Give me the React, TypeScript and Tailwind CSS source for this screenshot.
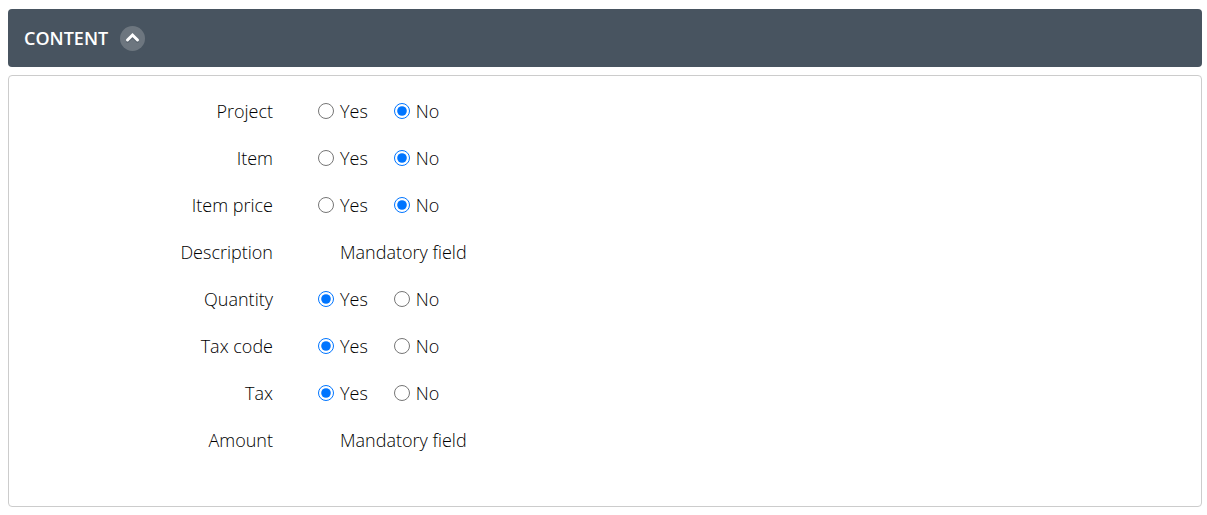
import { useState } from "react";

type Choice = "yes" | "no";

type Field = {
  id: string;
  label: string;
  value?: Choice;
};

const fields: Field[] = [
  { id: "project", label: "Project", value: "no" },
  { id: "item", label: "Item", value: "no" },
  { id: "item-price", label: "Item price", value: "no" },
  { id: "description", label: "Description" },
  { id: "quantity", label: "Quantity", value: "yes" },
  { id: "tax-code", label: "Tax code", value: "yes" },
  { id: "tax", label: "Tax", value: "yes" },
  { id: "amount", label: "Amount" },
];

function Radio({ field, choice, label }: { field: Field; choice: Choice; label: string }) {
  return (
    <label className="flex items-center gap-[6px]">
      <input
        type="radio"
        name={field.id}
        value={choice}
        defaultChecked={field.value === choice}
        className="w-4 h-4 accent-[#0075ff]"
      />
      {label}
    </label>
  );
}

function FieldRow({ field }: { field: Field }) {
  const labelId = `${field.id}-label`;

  return (
    <div className="flex items-center h-[47px]">
      <span id={labelId} className="w-[264px] shrink-0 text-right">
        {field.label}
      </span>
      {field.value ? (
        <div role="radiogroup" aria-labelledby={labelId} className="flex gap-[26px] pl-[45px]">
          <Radio field={field} choice="yes" label="Yes" />
          <Radio field={field} choice="no" label="No" />
        </div>
      ) : (
        <span className="pl-[67px]">Mandatory field</span>
      )}
    </div>
  );
}

export default function App() {
  const [open, setOpen] = useState(true);

  return (
    <main className="p-2 pt-[9px] pr-[5px] font-['Open_Sans',sans-serif] text-lg font-light text-black">
      <header className="flex items-center gap-3 h-[58px] px-4 rounded bg-[#485460] text-white">
        <h2 className="font-semibold">CONTENT</h2>
        <button
          type="button"
          aria-label="Toggle content"
          aria-expanded={open}
          onClick={() => setOpen(!open)}
          className="flex items-center justify-center w-[25px] h-[25px] rounded-full bg-[#6d767f]"
        >
          <svg viewBox="0 0 16 12" className={open ? "w-4 h-3" : "w-4 h-3 rotate-180"}>
            <path d="M2.5 9.5l5-5 5 5" fill="none" stroke="#5a646e" strokeWidth="3" strokeLinecap="round" />
            <path d="M2.5 8l5-5 5 5" fill="none" stroke="currentColor" strokeWidth="3" strokeLinecap="round" />
          </svg>
        </button>
      </header>

      {open && (
        <section className="mt-2 pt-[11px] pb-[43px] rounded border border-[#ccc] bg-white">
          {fields.map((field) => (
            <FieldRow key={field.id} field={field} />
          ))}
        </section>
      )}
    </main>
  );
}
